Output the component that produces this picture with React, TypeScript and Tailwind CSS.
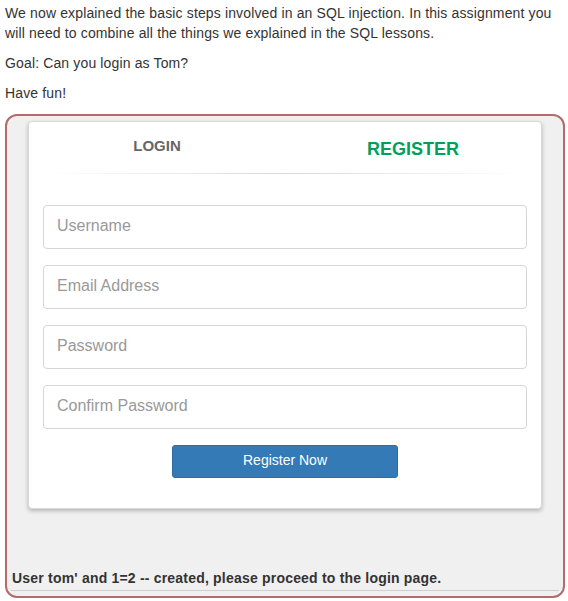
export default function App() {
  const fields = ["Username", "Email Address", "Password", "Confirm Password"];

  return (
    <div className="font-['Liberation_Sans',Arial,sans-serif] text-[14px] leading-[20px] text-[#333] bg-white min-h-[601px] pt-[3px]">
      <div className="px-[5px] tracking-[0.14px]">
        <p className="mb-[10px]">
          We now explained the basic steps involved in an SQL injection. In this assignment you will need to combine all the things we explained in the SQL lessons.
        </p>
        <p className="mb-[10px]">Goal: Can you login as Tom?</p>
        <p className="mb-[11px]">Have fun!</p>
      </div>

      <div className="ml-[5px] w-[560px] h-[484px] border-2 border-[#b36b6b] rounded-[12px] bg-[#f0f0f0] flex flex-col">
        <div className="mx-[21px] mt-[5px] h-[388px] bg-white border border-[#d9d9d9] rounded-[4px] shadow-[0_2px_4px_rgba(0,0,0,0.25)] flex flex-col">
          <div className="grid grid-cols-2 h-[51px]">
            <div className="text-center pt-[14px] text-[15px] leading-[20px] font-bold text-[#666]">LOGIN</div>
            <div className="text-center pt-[15px] text-[18px] leading-[24px] font-bold text-[#029f5b]">REGISTER</div>
          </div>
          <div className="mx-[20px] h-px bg-gradient-to-r from-transparent via-[#d8d8d8] to-transparent" />

          <div className="px-[14px] mt-[31px] flex flex-col gap-[16px]">
            {fields.map((f) => (
              <div
                key={f}
                className="h-[44px] border border-[#d6d6d6] rounded-[4px] px-[13px] pb-[2px] flex items-center text-[16px] text-[#999]"
              >
                {f}
              </div>
            ))}
          </div>

          <div className="flex justify-center mt-[16px]">
            <button className="w-[226px] h-[33px] pb-[3px] bg-[#337ab7] border border-[#2e6da4] rounded-[3px] text-white text-[14px] leading-[20px]">
              Register Now
            </button>
          </div>
        </div>

        <div className="flex-1" />
        <div className="pl-[5px] font-bold tracking-[0.2px]">User tom' and 1=2 -- created, please proceed to the login page.</div>
        <div className="mx-[4px] mt-[2px] mb-[5px] h-px bg-[#cfcfcf]" />
      </div>
    </div>
  );
}
